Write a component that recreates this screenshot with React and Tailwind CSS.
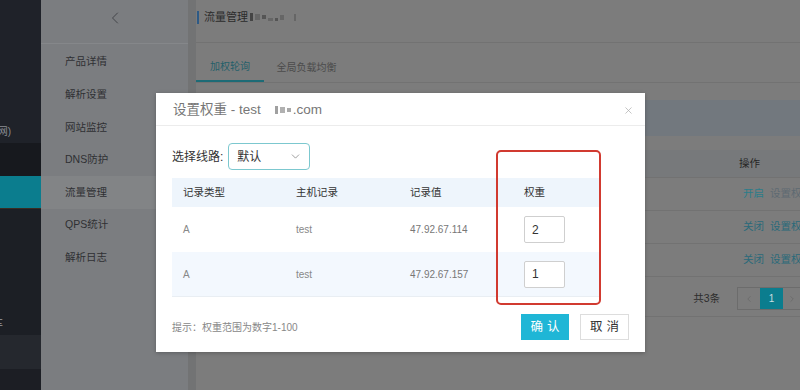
import { ChevronDown, ChevronLeft, ChevronRight, X } from 'lucide-react';

const font = { fontFamily: '"Liberation Sans", "Noto Sans CJK SC", sans-serif' };

const menuItems = ['产品详情', '解析设置', '网站监控', 'DNS防护', '流量管理', 'QPS统计', '解析日志'];

const records = [
  { type: 'A', host: 'test', value: '47.92.67.114', weight: '2' },
  { type: 'A', host: 'test', value: '47.92.67.157', weight: '1' },
];

// blurred-out part of a domain name
function Redacted({ long, className }) {
  return (
    <span className={`inline-flex items-center gap-[2px] ${className}`}>
      <span className="w-[3px] h-[8px] bg-[#444]" />
      <span className="w-[5px] h-[6px] bg-[#666]" />
      <span className="w-[4px] h-[4px] bg-[#555]" />
      {long && (
        <>
          <span className="w-[5px] h-[3px] bg-[#666] mt-[4px]" />
          <span className="w-[3px] h-[3px] bg-[#555] mt-[4px]" />
          <span className="w-[4px] h-[5px] bg-[#666]" />
          <span className="w-[6px]" />
          <span className="w-[2px] h-[7px] bg-[#666]" />
        </>
      )}
    </span>
  );
}

function Sidebar() {
  return (
    <div className="w-[41px] h-full flex flex-col bg-[#1f2229] text-[#8a8d93] text-[10px]">
      <div className="h-[120px]" />
      <div className="h-[23px] flex items-center justify-end pr-[30px]">网)</div>
      <div className="h-[33px] bg-[#17191e]" />
      <div className="h-[32px] bg-[#0b7d8e]" />
      <div className="h-[1px] bg-[#3a2d22]" />
      <div className="h-[126px] bg-[#1c1f25] flex items-end pb-[4px] text-[#9a9da3]">
        <span className="-ml-[7px]">车</span>
      </div>
      <div className="h-[34px] bg-[#25282e]" />
      <div className="flex-1 bg-[#1c1e24]" />
    </div>
  );
}

function SubMenu() {
  return (
    <div className="w-[147px] h-full bg-[#7b7d80] flex flex-col">
      <div className="h-[44px] border-b border-[#85878a] flex items-center justify-center pb-[8px]">
        <ChevronLeft className="w-[20px] h-[20px] text-[#3e4044]" strokeWidth={1.1} />
      </div>
      <div className="flex flex-col pt-[2px]">
        {menuItems.map((item) => (
          <div
            key={item}
            className={`h-[32.6px] flex items-center pl-[24px] text-[10.5px] text-[#2f3033] ${
              item === '流量管理' ? 'bg-[#828486]' : ''
            }`}
          >
            {item}
          </div>
        ))}
      </div>
    </div>
  );
}

function Main() {
  return (
    <div className="flex-1 h-full bg-[#7c7c7c] flex">
      <div className="w-[8px] h-full bg-[#727374]" />
      <div className="flex-1 flex flex-col">
        <div className="h-[43px] border-b border-[#727272] flex items-center pb-[8px] pl-[1px]">
          <span className="w-[2px] h-[13px] bg-[#2d5a86] mr-[5px]" />
          <span className="text-[11px] text-[#2b2b2b]">流量管理</span>
          <Redacted long className="ml-[2px]" />
        </div>
        <div className="h-[40px] border-b border-[#727272] flex">
          <div className="w-[68px] h-full flex items-center justify-center pt-[10px] border-b-2 border-[#1d6b76] text-[10px] text-[#25606a]">
            加权轮询
          </div>
          <div className="w-[85px] h-full flex items-center justify-center pt-[10px] text-[10px] text-[#4b4b4b]">
            全局负载均衡
          </div>
        </div>
        <div className="h-[36px] mt-[17px] bg-[#72787e]" />
        <div className="h-[14px]" />
        <div className="flex flex-col text-[10.5px]">
          <div className="h-[28px] bg-[#77797b] border-b border-[#727272] flex items-center justify-end pr-[40px] text-[#262626]">
            操作
          </div>
          {['开启', '关闭', '关闭'].map((s, i) => (
            <div key={i} className="h-[33px] border-b border-[#727272] flex items-center justify-end gap-[6px] text-[#2a6a7a]">
              <span className={i === 0 ? 'text-[#2b7d8a]' : ''}>{s}</span>
              <span className={`w-[30px] overflow-hidden whitespace-nowrap ${i === 0 ? 'text-[#5e6a72]' : ''}`}>设置权</span>
            </div>
          ))}
          <div className="h-[40px] border-b border-[#727272] flex items-center justify-end gap-[17px] pt-[4px] -mr-[1px]">
            <span className="text-[#2d2d2d]">共3条</span>
            <div className="flex h-[23px] border border-[#6c6c6c]">
              <div className="w-[22px] flex items-center justify-center text-[#6a6a6a]">
                <ChevronLeft className="w-[10px] h-[10px]" />
              </div>
              <div className="w-[23px] bg-[#0b7d8e] flex items-center justify-center text-[10px] text-[#c9dde0]">1</div>
              <div className="w-[17px] flex items-center justify-center text-[#6a6a6a]">
                <ChevronRight className="w-[10px] h-[10px]" />
              </div>
            </div>
          </div>
        </div>
      </div>
    </div>
  );
}

function WeightModal() {
  return (
    <div className="absolute left-[156px] top-[93px] w-[489px] h-[259px] bg-white shadow-[0_1px_4px_rgba(0,0,0,0.25)] flex flex-col">
      <div className="h-[33px] px-[17px] flex items-center justify-between border-b border-[#ececec]">
        <div className="flex items-center text-[13.5px] text-[#777] pt-[2px]">
          <span>设置权重 - test</span>
          <Redacted className="ml-[14px] opacity-50" />
          <span className="ml-[2px]">.com</span>
        </div>
        <X className="w-[11px] h-[11px] text-[#aaa] mr-[-6px] mt-[3px]" strokeWidth={1.5} />
      </div>

      <div className="px-[16px] flex flex-col">
        <div className="mt-[17px] flex items-center gap-[5px]">
          <span className="text-[12px] text-[#333]">选择线路:</span>
          <div className="w-[82px] h-[27px] border border-[#7cc8cf] rounded-[4px] flex items-center justify-between pl-[8px] pr-[7px]">
            <span className="text-[12px] text-[#333]">默认</span>
            <ChevronDown className="w-[13px] h-[13px] text-[#777]" strokeWidth={1.3} />
          </div>
        </div>

        <div className="mt-[8px] w-[429px]">
          <div className="h-[29px] bg-[#eef5fc] grid grid-cols-[113px_114px_114px_88px] items-center pl-[11px] text-[10.5px] text-[#333]">
            <span>记录类型</span>
            <span>主机记录</span>
            <span>记录值</span>
            <span>权重</span>
          </div>
          {records.map((r, i) => (
            <div
              key={r.value}
              className={`h-[45px] grid grid-cols-[113px_114px_114px_88px] items-center pl-[11px] text-[10px] text-[#888] ${
                i === 1 ? 'bg-[#f3f8fe] border-b border-[#e9eef3]' : 'bg-white'
              }`}
            >
              <span>{r.type}</span>
              <span>{r.host}</span>
              <span className="text-[#777]">{r.value}</span>
              <div className="w-[41px] h-[27px] border border-[#cfcfcf] rounded-[2px] bg-white flex items-center pl-[7px] text-[12px] text-[#333]">
                {r.weight}
              </div>
            </div>
          ))}
        </div>

        <div className="mt-[17px] h-[26px] flex items-center justify-between">
          <span className="text-[10px] text-[#888]">提示：权重范围为数字1-100</span>
          <div className="flex gap-[11px]">
            <button className="w-[48px] h-[26px] bg-[#1fb6d6] text-white text-[12.5px] tracking-[4px] pl-[4px]">确认</button>
            <button className="w-[49px] h-[26px] bg-white border border-[#ddd] text-[#333] text-[12.5px] tracking-[4px] pl-[4px]">取消</button>
          </div>
        </div>
      </div>

      <div className="absolute left-[340px] top-[57px] w-[105px] h-[155px] border-2 border-[#d13a30] rounded-[5px]" />
    </div>
  );
}

export default function App() {
  return (
    <div className="relative w-[800px] h-[390px] overflow-hidden flex" style={font}>
      <Sidebar />
      <SubMenu />
      <Main />
      <WeightModal />
    </div>
  );
}
